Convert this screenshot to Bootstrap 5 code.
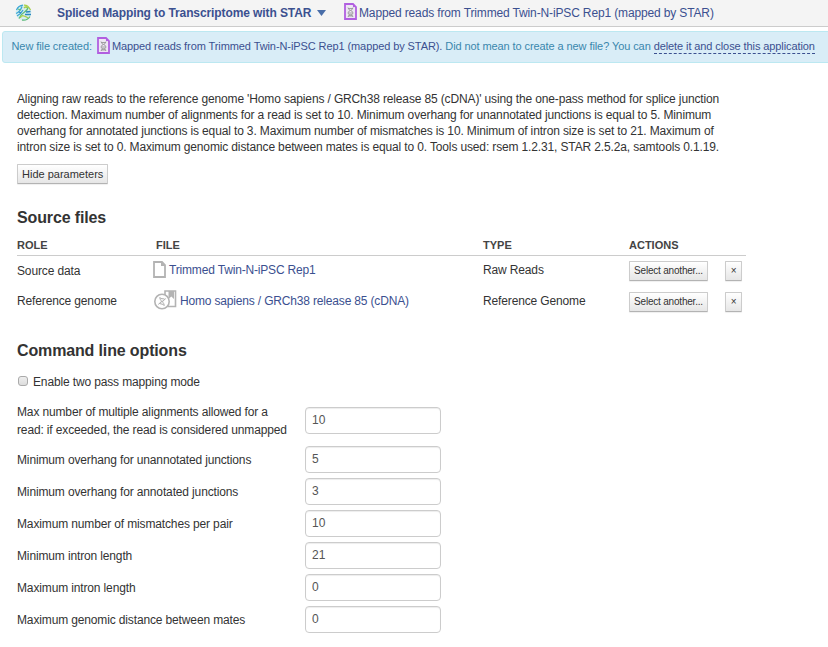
<!DOCTYPE html>
<html lang="en">
<head>
<meta charset="utf-8">
<meta name="viewport" content="width=device-width, initial-scale=1">
<title>Spliced Mapping to Transcriptome with STAR</title>
<link href="https://cdn.jsdelivr.net/npm/bootstrap@5.3.0/dist/css/bootstrap.min.css" rel="stylesheet">
<style>
body{font:12px/16px "Liberation Sans",Arial,sans-serif;letter-spacing:-.14px;color:#333;background:#fff;overflow:hidden}
svg{flex:none;display:block}
a{color:#3b5090;text-decoration:none}
.topbar{height:27px;background:#f4f4f4;border-bottom:1px solid #ccc;padding-left:15px;color:#3b5090}
.app-title{margin-left:25px;width:254px;letter-spacing:-.1px}
.caret{width:9px;height:6px;background:#496da8;clip-path:polygon(0 0,100% 0,50% 100%);margin-left:6px}
.notice{margin:4px -4px 0 2px;height:32px;padding:0 0 2px 8.5px;background:#d9edf7;border:1px solid #bce8f1;border-radius:3px;color:#3a87ad;font-size:11px;letter-spacing:-.09px;white-space:pre}
.notice a.dashed{border-bottom:1px dashed #3b5090;line-height:13px;margin-top:1px}
main{padding:28px 0 0 17px}
.intro{width:720px;white-space:nowrap}
h2{font-size:16px;line-height:20px;font-weight:700;margin:0}
.soft{--bs-btn-font-size:11px;--bs-btn-line-height:18px;--bs-btn-padding-y:0;--bs-btn-padding-x:4px;--bs-btn-border-radius:1px;--bs-btn-color:#333;--bs-btn-border-color:#ccc;background:linear-gradient(#fff,#e6e6e6);border-bottom-color:#b3b3b3;box-shadow:0 1px 1px #0001;white-space:nowrap}
.soft.tiny{--bs-btn-font-size:10px;padding:0;letter-spacing:-.2px}
.files{width:729px;display:grid;grid-template-columns:139px 327px 146px 117px}
.files .hd{font-weight:700;font-size:11px;letter-spacing:0;color:#444;height:19px;border-bottom:1px solid #ccc}
.files a{letter-spacing:-.17px}
.opts{display:grid;grid-template-columns:288px 136px;align-items:center;row-gap:5px}
.opts .form-control{height:27px;padding:0 6px 2px;font-size:12px;color:#555;border-color:#ccc;border-radius:4px;box-shadow:inset 0 1px 1px #00000013}
.opts .first-input{align-self:start;margin-top:4px}
.check{width:10px;height:10px;margin:-2px 5px 0 1px;border-color:#aaa;border-radius:2px;background:linear-gradient(#eee,#ddd)}
</style>
</head>
<body>
<svg width="0" height="0" class="position-absolute">
<symbol id="mapped" viewBox="0 0 13 17"><path d="M1 1H9L12 4V16H1Z" fill="#eee7f4" stroke="#b15fe0" stroke-width="1.8"/><path d="M9 1V4H12Z" fill="#b15fe0"/><path d="M4 4.500C4 8 9 7 9 10S4 11 4 14M9 4.500C9 8 4 7 4 10S9 11 9 14M4 5.500H9M4.500 10H8.500M4 13H9" fill="none" stroke="#999" stroke-width=".9"/></symbol>
</svg>
<header class="topbar d-flex align-items-center">
<svg width="17" height="17" viewBox="0 0 17 17" fill="none" stroke-width="1.3" style="margin-top:-2px"><circle cx="8.500" cy="8.500" r="7.800" fill="#d5edef" stroke="none"/><path d="M1.500 6Q3.500 1.500 8 1.200M1 9.500Q5 8 7 2.500M2 12Q6 10 8 6" stroke="#3aa5d5"/><path d="M4 14.500Q6 10 9.500 8T13 3M7 16Q12 17 15 12.500M3 5L6 6" stroke="#5dbb7c"/><path d="M9 1.200Q13 1 15.500 6M5.500 14Q6 11 9 12T13 14M9 4Q11 2 12 4" stroke="#a9cf45"/><path d="M10 10.500H16M15.500 7.500L11 8M4 8L6 9" stroke="#2b88c0"/></svg>
<strong class="app-title text-nowrap">Spliced Mapping to Transcriptome with STAR</strong><span class="caret"></span>
<svg width="13" height="17" style="margin:-3px 2px 0 18px"><use href="#mapped"/></svg><span class="text-nowrap">Mapped reads from Trimmed Twin-N-iPSC Rep1 (mapped by STAR)</span>
</header>
<div class="notice d-flex align-items-center"><span>New file created:</span><svg width="13" height="17" style="margin:-1px 2px 0 5px"><use href="#mapped"/></svg><a href="#">Mapped reads from Trimmed Twin-N-iPSC Rep1 (mapped by STAR).</a><span> Did not mean to create a new file? You can </span><a href="#" class="dashed">delete it and close this application</a></div>
<main>
<p class="intro mb-0">Aligning raw reads to the reference genome 'Homo sapiens / GRCh38 release 85 (cDNA)' using the one-pass method for splice junction<br>detection. Maximum number of alignments for a read is set to 10. Minimum overhang for unannotated junctions is equal to 5. Minimum<br>overhang for annotated junctions is equal to 3. Maximum number of mismatches is 10. Minimum of intron size is set to 21. Maximum of<br>intron size is set to 0. Maximum genomic distance between mates is equal to 0. Tools used: rsem 1.2.31, STAR 2.5.2a, samtools 0.1.19.</p>
<button class="btn soft d-block" style="width:91px;margin-top:9px">Hide parameters</button>
<h2 style="margin-top:24px">Source files</h2>
<div class="files" style="margin-top:9px">
<div class="hd">ROLE</div><div class="hd">FILE</div><div class="hd">TYPE</div><div class="hd">ACTIONS</div>
<div style="padding-top:7px;height:30px">Source data</div>
<div class="d-flex" style="padding-top:5px"><svg width="13" height="17" viewBox="0 0 13 17" style="margin:0 3px 0 -3px"><path d="M1 1H9L12 4V16H1Z" fill="#fff" stroke="#b3b3b3" stroke-width="1.800"/><path d="M8 1V5H12V4L9 1Z" fill="#b3b3b3"/></svg><a href="#" style="margin-top:1px">Trimmed Twin-N-iPSC Rep1</a></div>
<div style="padding-top:6px">Raw Reads</div>
<div class="d-flex" style="padding-top:5px"><button class="btn soft tiny" style="width:79px;height:20px">Select another...</button><button class="btn soft tiny" style="width:17px;height:20px;margin-left:17px">×</button></div>
<div style="padding-top:7px;height:32px">Reference genome</div>
<div class="d-flex" style="padding-top:4px"><svg width="23" height="20" viewBox="0 0 23 20" fill="none" style="margin:0 3px 0 -2px"><path d="M11 5V1H21.500V16.500H14" stroke="#b3b3b3" stroke-width="1.600"/><path d="M14.500 1H20V9L17.300 6.500L14.500 9Z" fill="#b3b3b3"/><circle cx="8" cy="11.500" r="7.200" fill="#fff" stroke="#b3b3b3" stroke-width="1.600"/><path d="M6 7C5 11 11 12 10 16M11.500 8.500C10 12 6 11 4.500 14.500M6.500 8.500L10.500 9M5.500 13.500L9.500 14.500" stroke="#aaa"/></svg><a href="#" style="margin-top:3px">Homo sapiens / GRCh38 release 85 (cDNA)</a></div>
<div style="padding-top:7px">Reference Genome</div>
<div class="d-flex" style="padding-top:6px"><button class="btn soft tiny" style="width:79px;height:20px">Select another...</button><button class="btn soft tiny" style="width:17px;height:20px;margin-left:17px">×</button></div>
</div>
<h2 style="margin-top:23px">Command line options</h2>
<div class="d-flex align-items-center" style="margin-top:13px"><input type="checkbox" class="form-check-input check" id="tp"><label for="tp">Enable two pass mapping mode</label></div>
<div class="opts" style="margin-top:13px">
<label style="line-height:18px;height:38px" for="a">Max number of multiple alignments allowed for a<br>read: if exceeded, the read is considered unmapped</label><input id="a" class="form-control first-input" value="10">
<label for="b">Minimum overhang for unannotated junctions</label><input id="b" class="form-control" value="5">
<label for="c">Minimum overhang for annotated junctions</label><input id="c" class="form-control" value="3">
<label for="d">Maximum number of mismatches per pair</label><input id="d" class="form-control" value="10">
<label for="e">Minimum intron length</label><input id="e" class="form-control" value="21">
<label for="f">Maximum intron length</label><input id="f" class="form-control" value="0">
<label for="g">Maximum genomic distance between mates</label><input id="g" class="form-control" value="0">
</div>
</main>
<script src="https://cdn.jsdelivr.net/npm/bootstrap@5.3.0/dist/js/bootstrap.bundle.min.js"></script>
</body>
</html>
